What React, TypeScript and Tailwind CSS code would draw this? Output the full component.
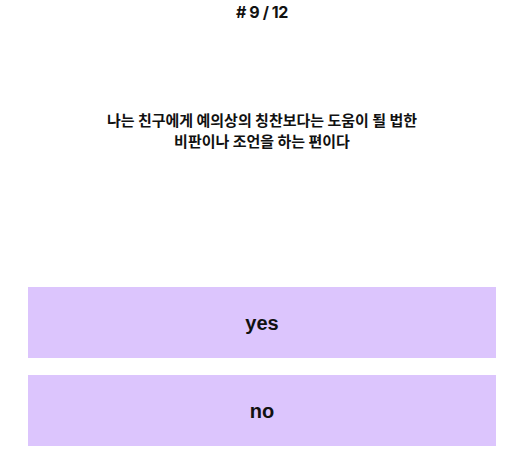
import React from 'react';

export default function App() {
    const answers = ['yes', 'no'];

    return (
        <div className="w-[526px] h-[453px] bg-white">
            <div className="w-[524px] flex flex-col items-center font-['Liberation_Sans','Noto_Sans_CJK_KR',sans-serif] text-[#111]">
                <div className="mt-[1px] h-[22px] flex items-center text-[16px] font-bold tracking-[-0.4px] font-['Inter','Noto_Sans_CJK_KR',sans-serif]">
                    # 9 / 12
                </div>
                <div className="mt-[86px] h-[178px] text-center text-[15px] leading-[21px] font-bold font-['Noto_Sans_CJK_KR',sans-serif]">
                    나는 친구에게 예의상의 칭찬보다는 도움이 될 법한
                    <br />
                    비판이나 조언을 하는 편이다
                </div>
                <div className="w-[468px] flex flex-col gap-[17px]">
                    {answers.map((a) => (
                        <button
                            key={a}
                            className="h-[71px] w-full bg-[#dcc5fd] text-[20px] font-bold text-[#111]"
                        >
                            {a}
                        </button>
                    ))}
                </div>
            </div>
        </div>
    );
}
